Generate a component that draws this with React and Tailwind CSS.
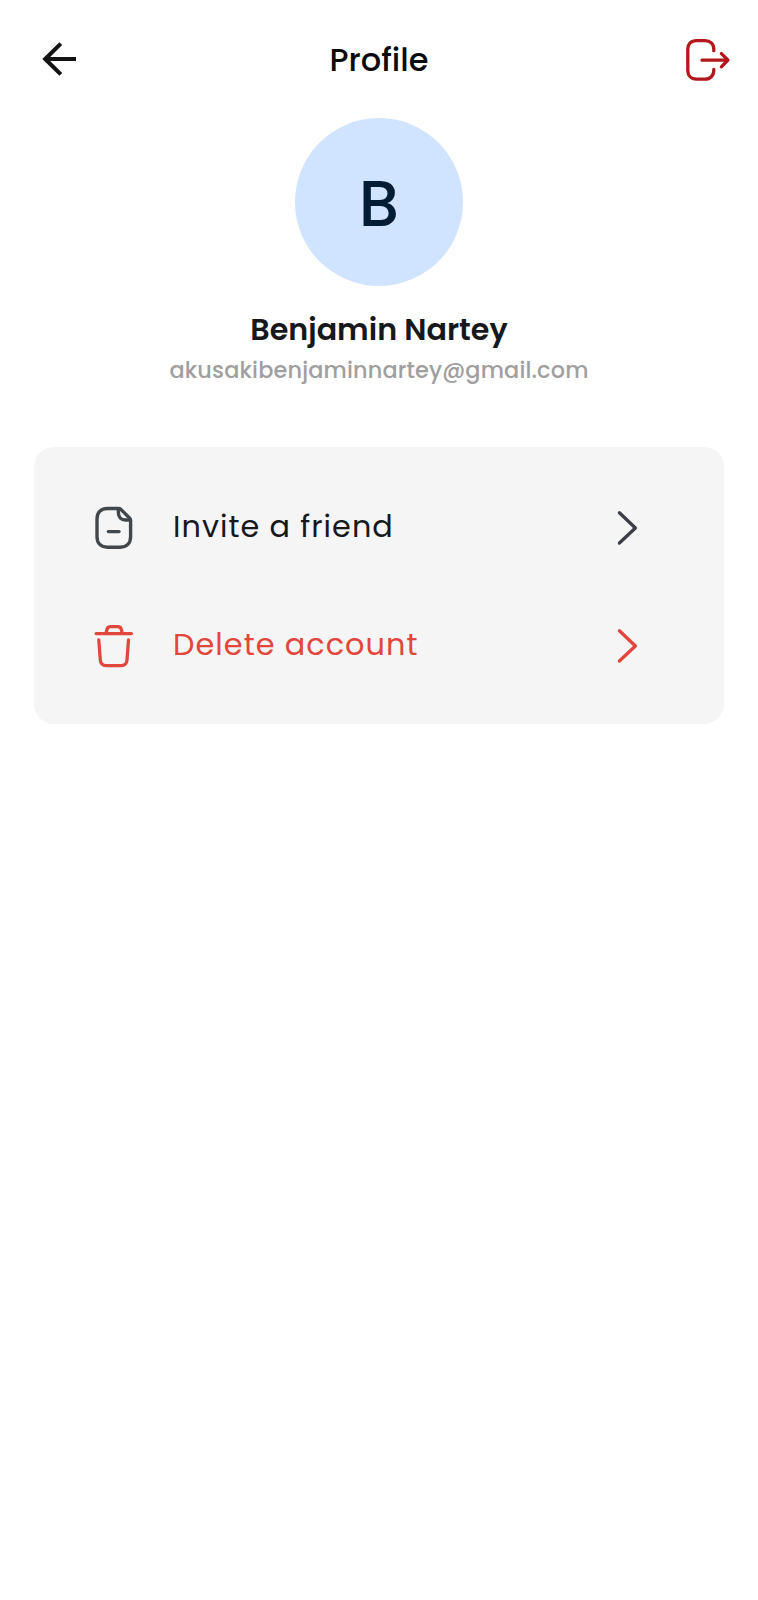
import React from 'react';

const BackIcon = () => (
  <svg width="40" height="40" viewBox="0 0 40 40" fill="none" stroke="currentColor" strokeWidth="4.1" strokeLinecap="butt" strokeLinejoin="miter">
    <path d="M37 20H6.5M21.8 4.6L6.2 20L21.8 35.4" />
  </svg>
);

const LogoutIcon = () => (
  <svg width="48" height="48" viewBox="0 0 48 48" fill="none" stroke="currentColor" strokeWidth="3.3" strokeLinecap="round" strokeLinejoin="round">
    <path d="M29.8 14.7V13C29.8 8 26.2 4.6 21 4.6H12.5C7 4.6 3.8 8 3.8 13V34.5C3.8 39.5 7 43.2 12.5 43.2H21C26.2 43.2 29.8 39.5 29.8 34.5V33.5" />
    <path d="M18 24.2H43.3M37.4 17.6L44 24.2L37.4 30.8" />
  </svg>
);

const FileIcon = () => (
  <svg width="44" height="48" viewBox="0 0 44 48" fill="none" stroke="currentColor" strokeWidth="3.4" strokeLinecap="round" strokeLinejoin="round">
    <path d="M26.5 4.5H15.5C9 4.5 5 8.5 5 15V32.8C5 39.2 9 43.2 15.5 43.2H28.2C34.6 43.2 38.6 39.2 38.6 32.8V16.6C38.6 15.6 38.2 14.7 37.5 14L28.9 5.4C28.2 4.7 27.4 4.5 26.5 4.5Z" />
    <path d="M26.4 5V8.8C26.4 13.2 29.2 16 33.4 16H38.2" />
    <path d="M16.4 27.6H27" />
  </svg>
);

const TrashIcon = () => (
  <svg width="44" height="48" viewBox="0 0 44 48" fill="none" stroke="currentColor" strokeWidth="3.3" strokeLinecap="round" strokeLinejoin="round">
    <path d="M4.2 11.6H39.4" />
    <path d="M14 11.3L14.9 7.6C15.4 5.4 16.4 4.6 18.5 4.6H25.8C27.9 4.6 28.9 5.4 29.4 7.6L30.3 11.3" />
    <path d="M6.8 18L8.3 38C8.6 42 10.4 43.6 14.2 43.6H29.2C33 43.6 34.7 42 35 38L36.5 18" />
  </svg>
);

const ChevronIcon = () => (
  <svg width="24" height="40" viewBox="0 0 24 40" fill="none" stroke="currentColor" strokeWidth="3.3" strokeLinecap="round" strokeLinejoin="round">
    <path d="M3.4 4.8L19.4 20L3.4 35" />
  </svg>
);

const App = () => {
  return (
    <div className="min-h-screen bg-white font-['Poppins','Inter',sans-serif]">
      {/* Header */}
      <header className="h-[118px] pl-[39px] pr-[26px] grid grid-cols-[80px_1fr_93px] items-center">
        <button className="text-[#131313] justify-self-start">
          <BackIcon />
        </button>
        <h1 className="pt-0.5 text-center text-[32px] leading-10 font-medium text-[#0b0b0c]">Profile</h1>
        <button className="text-[#b3161b] justify-self-end mt-0.5">
          <LogoutIcon />
        </button>
      </header>

      <main>
        {/* User info */}
        <section className="flex flex-col items-center">
          <div className="w-[168px] h-[168px] rounded-full bg-[#d0e4ff] flex items-center justify-center">
            <span className="pt-[3px] text-[64px] leading-none font-medium text-[#001d34]">B</span>
          </div>
          <h2 className="mt-6 text-[30.2px] leading-10 font-semibold text-[#17181c]">Benjamin Nartey</h2>
          <p className="mt-0.5 text-[22.4px] leading-9 font-medium tracking-[0.16px] text-[#9f9f9f]">akusakibenjaminnartey@gmail.com</p>
        </section>

        {/* Options */}
        <section className="mt-[59px] ml-[34px] w-[690px] h-[277px] rounded-[20px] bg-[#f5f5f5] pt-[22px] pl-[58px] pr-[84px] text-[30.3px]">
          <button className="w-full h-[118px] flex items-center text-[#17181c]">
            <span className="text-[#41474b]"><FileIcon /></span>
            <span className="ml-[37px] pb-0.5 flex-1 text-left tracking-[1.05px]">Invite a friend</span>
            <span className="text-[#3b3e45]"><ChevronIcon /></span>
          </button>
          <button className="w-full h-[118px] flex items-center text-[#e2463c]">
            <TrashIcon />
            <span className="ml-[37px] pb-0.5 flex-1 text-left tracking-[1.05px]">Delete account</span>
            <ChevronIcon />
          </button>
        </section>
      </main>
    </div>
  );
};

export default App;
